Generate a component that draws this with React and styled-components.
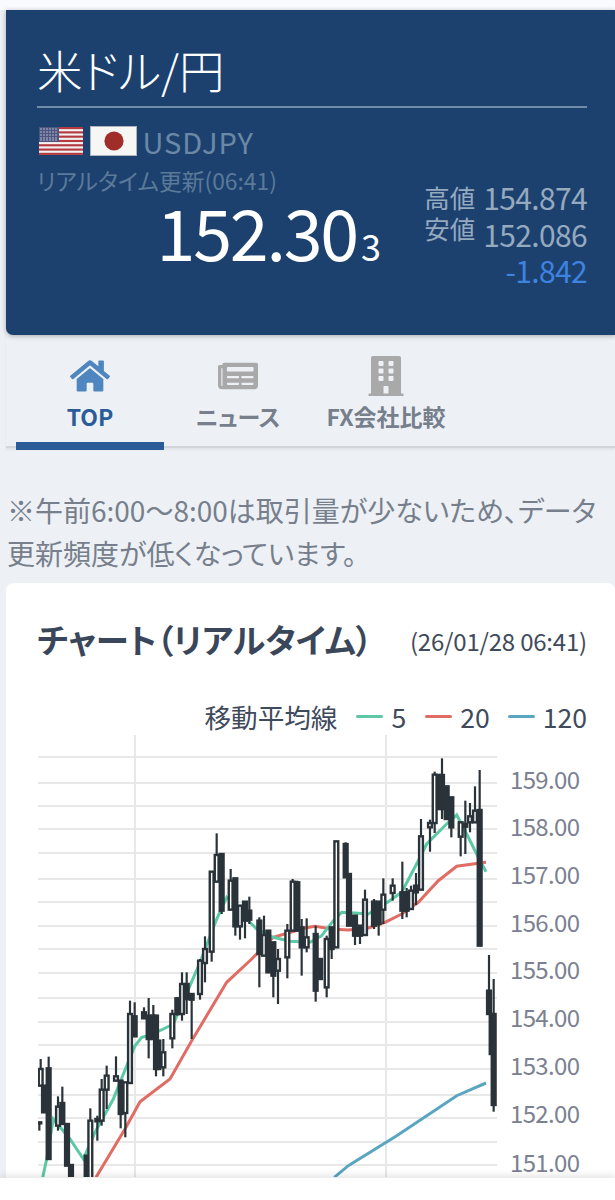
import React from "react";
import styled, { createGlobalStyle } from "styled-components";
import { FaHome, FaNewspaper, FaBuilding } from "react-icons/fa";

const Global = createGlobalStyle`
  html, body { margin: 0; padding: 0; background: #fff; }
  body { font-family: "Noto Sans CJK JP", "Noto Sans", sans-serif; }
  * { box-sizing: border-box; }
`;

const Page = styled.div`
  width: 615px; height: 1200px; overflow: hidden;
  display: flex; flex-direction: column; background: #fff;
`;
const Main = styled.main`
  height: 1178px; overflow: hidden; background: #edf1f5;
  display: flex; flex-direction: column; align-items: stretch;
`;
const TopStrip = styled.div`height: 10px; background: #f9fafe; flex: none;`;
const FooterBar = styled.div`
  flex: 1; background: #fff; position: relative;
  box-shadow: 0 -3px 7px rgba(0,0,0,.1);
`;
const RateCard = styled.section`
  flex: none; height: 325px; margin-left: 6px; background: #1c416f;
  border-radius: 0 0 0 7px; box-shadow: 0 1px 5px rgba(0,0,0,.3);
  padding: 0 28px 0 31px; color: #fff;
`;
const Title = styled.h1`
  margin: 0; border-bottom: 2px solid #6f8ca8;
  font-size: 45.5px; font-weight: 300; line-height: 119px; height: 98px; overflow: hidden;
  font-feature-settings: "palt"; letter-spacing: 0;
`;
const RateBody = styled.div`display: flex; justify-content: space-between;`;
const LeftCol = styled.div`width: 345px; flex: none; display: flex; flex-direction: column;`;
const PairRow = styled.div`display: flex; align-items: center; margin-top: 17px; height: 32px;`;
const FlagBox = styled.svg`display: block; flex: none; margin-right: ${p => p.$gap}px; margin-left: ${p => p.$left || 0}px;`;
const PairCode = styled.span`font-size: 29px; line-height: 32px; color: #6b89a6; letter-spacing: 1px; margin-left: -1px; position: relative; top: 0;`;
const Updated = styled.div`
  font-size: 22.8px; line-height: 30px; margin-top: 9px; color: #5b7a99;
  font-feature-settings: "palt"; white-space: nowrap;
`;
const PriceLine = styled.div`
  display: flex; justify-content: flex-end; align-items: baseline;
  margin-top: -3px; line-height: 76px; height: 76px;
`;
const PriceBig = styled.span`font-size: 70px; letter-spacing: -2.2px;`;
const PriceSmall = styled.span`font-size: 36px; margin-left: 4px; margin-right: 2px; letter-spacing: -1px;`;
const StatsCol = styled.div`width: 170px; flex: none; margin-top: 71px; display: flex; flex-direction: column; align-items: flex-end;`;
const StatsTop = styled.div`display: flex; gap: 8px; width: 100%; justify-content: flex-end;`;
const StatLabels = styled.div`flex: none; white-space: nowrap; font-size: 25.5px; line-height: 31px; color: #95a9bf; display: flex; flex-direction: column; padding-top: 2px;`;
const StatValues = styled.div`flex: none; white-space: nowrap; font-size: 30px; line-height: 36.5px; color: #95a9bf; letter-spacing: -.65px; text-align: right;`;
const Change = styled.div`font-size: 30px; line-height: 36.5px; color: #3f83e0; letter-spacing: -.65px;`;

const Tabs = styled.nav`
  flex: none; height: 113px; margin-left: 6px; padding-left: 10px;
  display: flex; border-bottom: 2px solid #d3d5d8; box-shadow: 0 2px 2px rgba(0,0,0,.05);
`;
const Tab = styled.div`
  position: relative; width: 148px; height: 111px; padding-top: 22px;
  display: flex; flex-direction: column; align-items: center;
  color: ${p => p.$active ? "#2a5c9a" : "#777f8c"};
  &::after {
    content: ""; display: ${p => p.$active ? "block" : "none"};
    position: absolute; left: 0; right: 0; bottom: -4px; height: 8px; background: #2a5c9a;
  }
`;
const TabIcon = styled.div`height: 38px; display: flex; align-items: center; justify-content: center;
  color: ${p => p.$active ? "#4f86c0" : "#a9a9aa"}; font-size: ${p => p.$size}px;`;
const TabLabel = styled.div`font-size: 23px; font-weight: 700; line-height: 30px; margin-top: 6px; white-space: nowrap; font-feature-settings: "palt";`;

const Note = styled.p`
  margin: 0; flex: none; padding: 41px 0 0 7px; font-size: 28px; line-height: 43px; color: #777f8c;
  font-feature-settings: "palt"; height: 135px; white-space: nowrap;
`;
const ChartCard = styled.section`
  flex: 1; margin-left: 6px; background: #fff; border-radius: 8px 8px 0 0; padding: 0 28px 0 31px;
`;
const ChartHead = styled.div`display: flex; justify-content: space-between; align-items: center; height: 116px; padding-bottom: 5px;`;
const ChartTitle = styled.h2`margin: 0; font-size: 33.4px; font-weight: 700; color: #3a4659; font-feature-settings: "palt"; white-space: nowrap;`;
const ChartDate = styled.span`font-size: 24px; color: #3f4a5c; white-space: nowrap; letter-spacing: -.2px; padding-top: 4px;`;
const Legend = styled.div`
  display: flex; justify-content: flex-end; align-items: center; height: 36px; margin-top: -1px;
  font-size: 26.6px; color: #3f4a5c; font-feature-settings: "palt";
`;
const LegendName = styled.span`margin-right: 19px;`;
const Swatch = styled.i`display: block; width: 27px; height: 3px; border-radius: 2px; background: ${p => p.$c}; margin-right: 8px;`;
const LegendVal = styled.span`margin-right: ${p => p.$mr || 0}px;`;
const ChartSvg = styled.svg`display: block; margin-left: -31px; margin-top: 1px;`;
const AxisText = styled.text`font-size: 24px; fill: #7b8190; font-family: "Noto Sans CJK JP", "Noto Sans", sans-serif;`;

const z3 = (X, Y) => [X / 3, 730 + Y / 3];
const z4 = (X, Y) => [X / 3, 960 + Y / 3];
const z5 = (X, Y) => [305 + X / 3, 730 + Y / 3];
const z6 = (X, Y) => [305 + X / 3, 960 + Y / 3];

// [X, bodyTop, bodyBottom, wickTop, wickBottom, hollow]
const c4 = [
  [122,330,380,300,380,1],[132,380,460,380,460,0],[146,328,600,293,600,0],[118,490,493,490,515,0],
  [174,443,500,412,515,1],[187,432,495,383,495,0],[201,495,620,495,620,0],[213,618,660,618,660,0],
  [260,590,660,590,660,0],[271,485,660,448,660,1],[292,480,487,470,545,0],[305,392,485,360,500,1],
  [320,350,392,320,450,1],[348,352,365,292,365,1],[362,365,465,365,508,0],[376,370,462,370,535,1],
  [390,165,372,125,372,1],[404,172,232,130,232,0],[432,160,178,145,178,0],[446,170,240,117,298,0],
  [460,170,240,138,240,0],[468,170,330,170,352,0],[475,245,330,245,330,0],[490,280,325,240,352,1],
  [517,165,238,152,268,1],[532,118,165,115,170,0],[546,75,165,40,185,1],[560,75,120,40,165,0],
  [575,105,122,105,240,0],[600,5,105,0,122,1],
];
const c3 = [
  [615,660,702,622,760,1],[635,428,668,428,698,1],[650,378,458,313,458,1],[665,375,545,375,555,0],
  [692,455,542,420,542,1],[706,448,592,448,620,0],[720,530,592,530,632,1],[735,518,575,518,628,0],
  [748,545,572,503,585,0],[778,575,675,565,775,0],[792,618,680,560,680,1],[805,605,730,605,730,0],
  [820,640,740,640,805,0],[834,690,725,660,825,1],[862,605,685,585,748,1],[878,458,605,450,605,1],
  [892,460,605,455,605,0],[905,595,655,570,740,0],[920,625,655,568,670,1],
];
const c5 = [
  [32,615,785,590,818,0],[45,690,750,690,750,0],[65,630,775,620,805,1],[80,595,660,595,690,0],
  [94,337,655,337,655,1],[122,345,445,340,445,0],[132,435,590,435,590,0],[150,560,620,560,648,0],
  [165,590,620,590,645,0],[180,512,618,482,618,1],[207,518,590,510,600,0],[221,518,585,518,620,0],
  [235,497,542,448,585,1],[263,470,492,448,515,1],[292,490,545,398,570,0],[305,490,545,477,565,0],
  [318,485,540,470,540,1],[333,470,490,432,528,0],[348,322,482,270,482,1],[375,282,295,272,368,1],
  [389,137,282,128,312,1],[403,138,240,138,240,0],[411,138,240,88,270,0],[425,172,270,172,270,0],
  [439,205,295,205,325,0],[467,280,323,280,382,1],[481,285,293,215,375,0],[495,262,280,222,310,1],
  [510,245,280,172,280,1],[524,243,650,123,650,0],
];
const c6 = [
  [552,95,165,-12,165,0],[560,165,285,165,285,0],[566,165,438,60,458,0],
];

const conv = (list, f) => list.map(([X, a, b, t, u, h]) => {
  const [x, y1] = f(X, a); const [, y2] = f(X, b); const [, w1] = f(X, t); const [, w2] = f(X, u);
  return { x, y1, y2, w1, w2, h };
});
const candles = [...conv(c4, z4), ...conv(c3, z3), ...conv(c5, z5), ...conv(c6, z6)];

const pts = (groups) => groups.flatMap(([f, l]) => l.map(([X, Y]) => f(X, Y).map(v => v.toFixed(1)).join(","))).join(" ");
const green = pts([
  [z4, [[128,655],[140,600],[160,480]]], [z4, [[210,540],[250,600],[285,520],[340,420],[380,320],[405,260],[425,235],[445,230],[490,210],[520,195],[570,80],[600,10]]],
  [z3, [[650,570],[680,505],[740,570],[770,600],[820,625],[870,637]]],
  [z5, [[15,640],[50,620],[85,575],[110,550],[150,552],[190,555],[240,525],[290,490],[340,395],[365,345],[430,280],[455,258],[490,325],[520,385],[543,428]]],
]);
const red = pts([
  [z4, [[288,655],[375,510],[420,428],[510,360],[575,245],[680,70],[755,0]]],
  [z3, [[820,625]]],
  [z5, [[0,597],[30,592],[80,600],[130,603],[190,597],[240,580],[290,555],[340,520],[400,455],[455,412],[543,400]]],
]);
const blue = pts([[z6, [[88,655],[130,620],[275,530],[455,410],[543,372]]]]);

const gridY = [758,784,807,830,854,880,903,927,950,974,999,1023,1046,1070,1096,1119,1143,1166];
const labels = [["159.00",781],["158.00",828],["157.00",876],["156.00",924],["155.00",971],["154.00",1019],["153.00",1067],["152.00",1115],["151.00",1164]];

const Chart = () => (
  <ChartSvg width="609" height="442" viewBox="6 736 609 442">
    <defs><clipPath id="plot"><rect x="38" y="736" width="459" height="442" /></clipPath></defs>
    {gridY.map(y => <line key={y} x1="38" x2="497" y1={y} y2={y} stroke="#e8e8e8" strokeWidth="2" />)}
    {[135, 386].map(x => <line key={x} x1={x} x2={x} y1="736" y2="1178" stroke="#e8e8e8" strokeWidth="2" />)}
    <g clipPath="url(#plot)">
      <polyline points={blue} fill="none" stroke="#5aa5bf" strokeWidth="3" />
      <polyline points={red} fill="none" stroke="#e06c63" strokeWidth="3" />
      <polyline points={green} fill="none" stroke="#5cc8a5" strokeWidth="3" />
      {candles.map((c, i) => (
        <g key={i}>
          <line x1={c.x} x2={c.x} y1={c.w1} y2={c.w2} stroke="#2a3339" strokeWidth="2.2" />
          <rect x={c.x - 1.9} y={c.y1} width="3.8" height={Math.max(c.y2 - c.y1, 1)} fill={c.h ? "#fff" : "#2a3339"} stroke="#2a3339" strokeWidth="2.4" />
        </g>
      ))}
    </g>
    {labels.map(([t, y]) => <AxisText key={t} x="510" y={y + 8.5} textLength="70">{t}</AxisText>)}
  </ChartSvg>
);

const USFlag = () => (
  <FlagBox $gap={7} $left={1.5} width="44" height="28" viewBox="0 0 44 28">
    <rect width="44" height="28" fill="#f2f2f2" />
    {[0,1,2,3,4,5,6].map(i => <rect key={i} y={i * 4.3} width="44" height="2.15" fill="#b5393f" />)}
    <rect width="20" height="15" fill="#4d5680" />
    {[2,5,8,11,14,17].flatMap(x => [2,5,8,11,13].map(y => <circle key={x + "-" + y} cx={x} cy={y} r=".7" fill="#d7d7e2" />))}
  </FlagBox>
);
const JPFlag = () => (
  <FlagBox $gap={7} width="47" height="30" viewBox="0 0 47 30">
    <rect x=".5" y=".5" width="46" height="29" fill="#f6f6f4" stroke="#aeb4bb" />
    <circle cx="24" cy="15" r="9.6" fill="#a12d2a" />
  </FlagBox>
);

export default function App() {
  return (
    <Page>
      <Global />
      <Main>
        <TopStrip />
        <RateCard>
          <Title>米ドル/円</Title>
          <RateBody>
            <LeftCol>
              <PairRow><USFlag /><JPFlag /><PairCode>USDJPY</PairCode></PairRow>
              <Updated>リアルタイム更新(06:41)</Updated>
              <PriceLine><PriceBig>152.30</PriceBig><PriceSmall>3</PriceSmall></PriceLine>
            </LeftCol>
            <StatsCol>
              <StatsTop>
                <StatLabels><span>高値</span><span>安値</span></StatLabels>
                <StatValues>154.874<br />152.086</StatValues>
              </StatsTop>
              <Change>-1.842</Change>
            </StatsCol>
          </RateBody>
        </RateCard>
        <Tabs>
          <Tab $active><TabIcon $active $size={40}><FaHome /></TabIcon><TabLabel>TOP</TabLabel></Tab>
          <Tab><TabIcon $size={40}><FaNewspaper /></TabIcon><TabLabel>ニュース</TabLabel></Tab>
          <Tab><TabIcon $size={40}><FaBuilding /></TabIcon><TabLabel>FX会社比較</TabLabel></Tab>
        </Tabs>
        <Note>※午前6:00〜8:00は取引量が少ないため、データ<br />更新頻度が低くなっています。</Note>
        <ChartCard>
          <ChartHead>
            <ChartTitle>チャート（リアルタイム）</ChartTitle>
            <ChartDate>(26/01/28 06:41)</ChartDate>
          </ChartHead>
          <Legend>
            <LegendName>移動平均線</LegendName>
            <Swatch $c="#5cc8a5" /><LegendVal $mr={19}>5</LegendVal>
            <Swatch $c="#e06c63" /><LegendVal $mr={18}>20</LegendVal>
            <Swatch $c="#5aa5bf" /><LegendVal>120</LegendVal>
          </Legend>
          <Chart />
        </ChartCard>
      </Main>
      <FooterBar />
    </Page>
  );
}
